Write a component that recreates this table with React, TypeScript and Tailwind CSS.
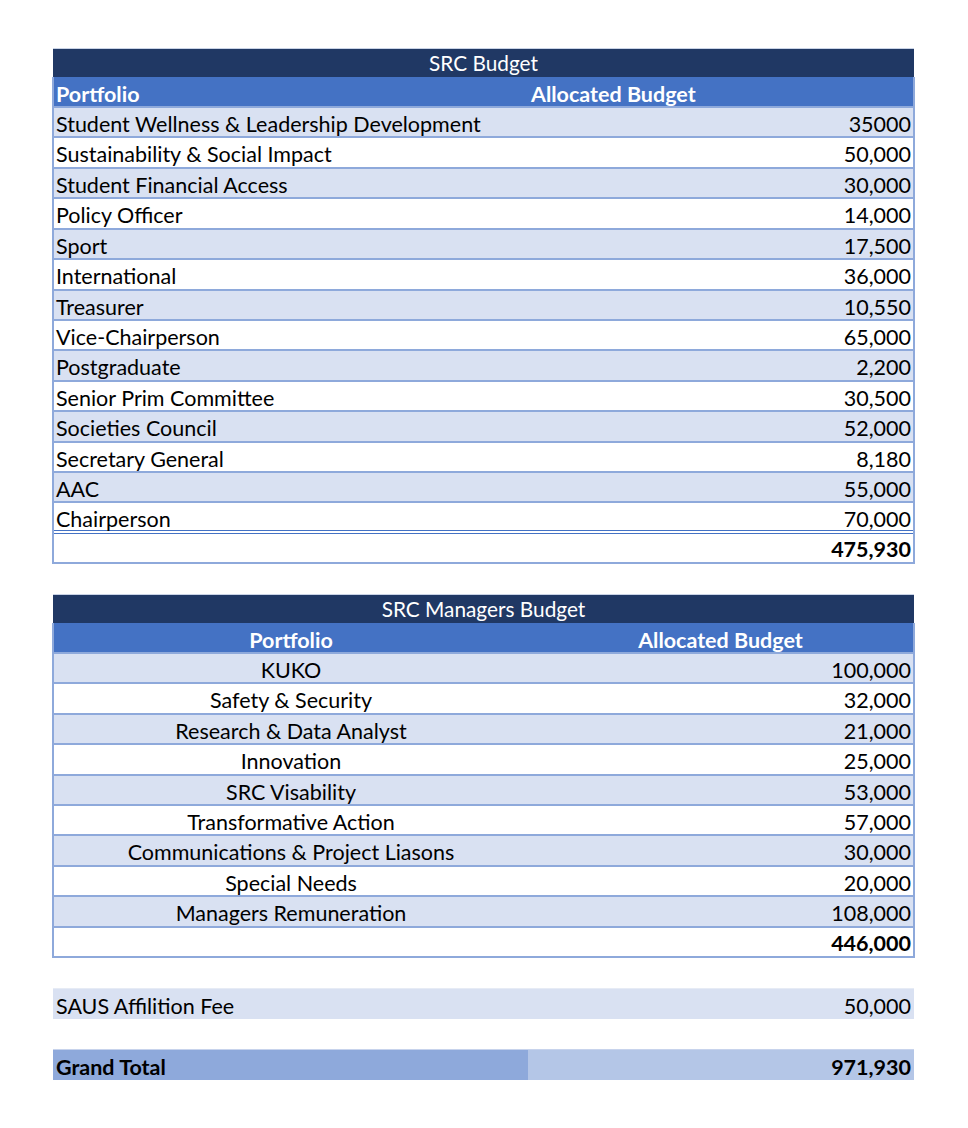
import React from "react";

const font = { fontFamily: "Lato, 'Open Sans', 'Liberation Sans', sans-serif" };

type Row = [string, string];

const src: Row[] = [
  ["Student Wellness & Leadership Development", "35000"],
  ["Sustainability & Social Impact", "50,000"],
  ["Student Financial Access", "30,000"],
  ["Policy Officer", "14,000"],
  ["Sport", "17,500"],
  ["International", "36,000"],
  ["Treasurer", "10,550"],
  ["Vice-Chairperson", "65,000"],
  ["Postgraduate", "2,200"],
  ["Senior Prim Committee", "30,500"],
  ["Societies Council", "52,000"],
  ["Secretary General", "8,180"],
  ["AAC", "55,000"],
  ["Chairperson", "70,000"],
];

const mgr: Row[] = [
  ["KUKO", "100,000"],
  ["Safety & Security", "32,000"],
  ["Research & Data Analyst", "21,000"],
  ["Innovation", "25,000"],
  ["SRC Visability", "53,000"],
  ["Transformative Action", "57,000"],
  ["Communications & Project Liasons", "30,000"],
  ["Special Needs", "20,000"],
  ["Managers Remuneration", "108,000"],
];

function Table({
  title,
  rows,
  total,
  centered,
  doubleLine,
}: {
  title: string;
  rows: Row[];
  total: string;
  centered: boolean;
  doubleLine: boolean;
}) {
  return (
    <div className="flex flex-col">
      <div className="mx-[1px] h-[29px] bg-[#203864] border-t border-[#c9d3e6] flex items-center justify-center pt-[1px] text-white text-[20.8px] leading-none">
        {title}
      </div>
      <div className="border-x-2 border-b-2 border-[#8EA9DB]">
        <div className="h-[31px] bg-[#4472C4] flex items-start pt-[7px] text-white font-bold text-[21.5px] leading-none border-b-2 border-[#8EA9DB] overflow-hidden">
          {centered ? (
            <>
              <div className="w-[474px] text-center">Portfolio</div>
              <div className="flex-1 text-center">Allocated Budget</div>
            </>
          ) : (
            <>
              <div className="w-[474px] pl-[2px]">Portfolio</div>
              <div className="flex-1 pl-[3px]">Allocated Budget</div>
            </>
          )}
        </div>
        {rows.map((r, i) => {
          const last = i === rows.length - 1;
          return (
            <div
              key={r[0]}
              className={
                "h-[30.43px] flex items-start pt-[6px] text-[21.5px] leading-none text-black " +
                (i % 2 === 0 ? "bg-[#D9E1F2] " : "bg-white ") +
                (last
                  ? doubleLine
                    ? "border-b-[4px] border-double border-[#4472C4]"
                    : "border-b-2 border-[#8EA9DB]"
                  : "border-b-2 border-[#8EA9DB]")
              }
            >
              <div className={"w-[474px] " + (centered ? "text-center" : "pl-[2px]")}>{r[0]}</div>
              <div className="flex-1 text-right pr-[2px]">{r[1]}</div>
            </div>
          );
        })}
        <div className="h-[28px] flex items-start justify-end pr-[2px] pt-[5px] font-bold text-[21.5px] leading-none text-black bg-white">
          {total}
        </div>
      </div>
    </div>
  );
}

export default function App() {
  return (
    <div className="min-h-[1128px] bg-white pt-[48px]" style={font}>
      <div className="ml-[52px] w-[863px] flex flex-col">
        <Table title="SRC Budget" rows={src} total="475,930" centered={false} doubleLine={true} />
        <div className="h-[30px]" />
        <Table title="SRC Managers Budget" rows={mgr} total="446,000" centered={true} doubleLine={false} />
        <div className="h-[30px]" />
        <div className="mx-[1px] h-[31px] bg-[#D9E1F2] border-t border-[#e6ebf5] flex items-start justify-between px-[3px] pt-[7px] text-[21.5px] leading-none text-black">
          <span>SAUS Affilition Fee</span>
          <span>50,000</span>
        </div>
        <div className="h-[30px]" />
        <div className="mx-[1px] h-[31px] flex border-t border-[#c7d3ec] text-[21.5px] leading-none font-bold text-black">
          <div className="w-[475px] bg-[#8EA9DB] flex items-start pl-[3px] pt-[7px]">Grand Total</div>
          <div className="flex-1 bg-[#B4C6E7] flex items-start justify-end pr-[3px] pt-[7px]">971,930</div>
        </div>
      </div>
    </div>
  );
}
